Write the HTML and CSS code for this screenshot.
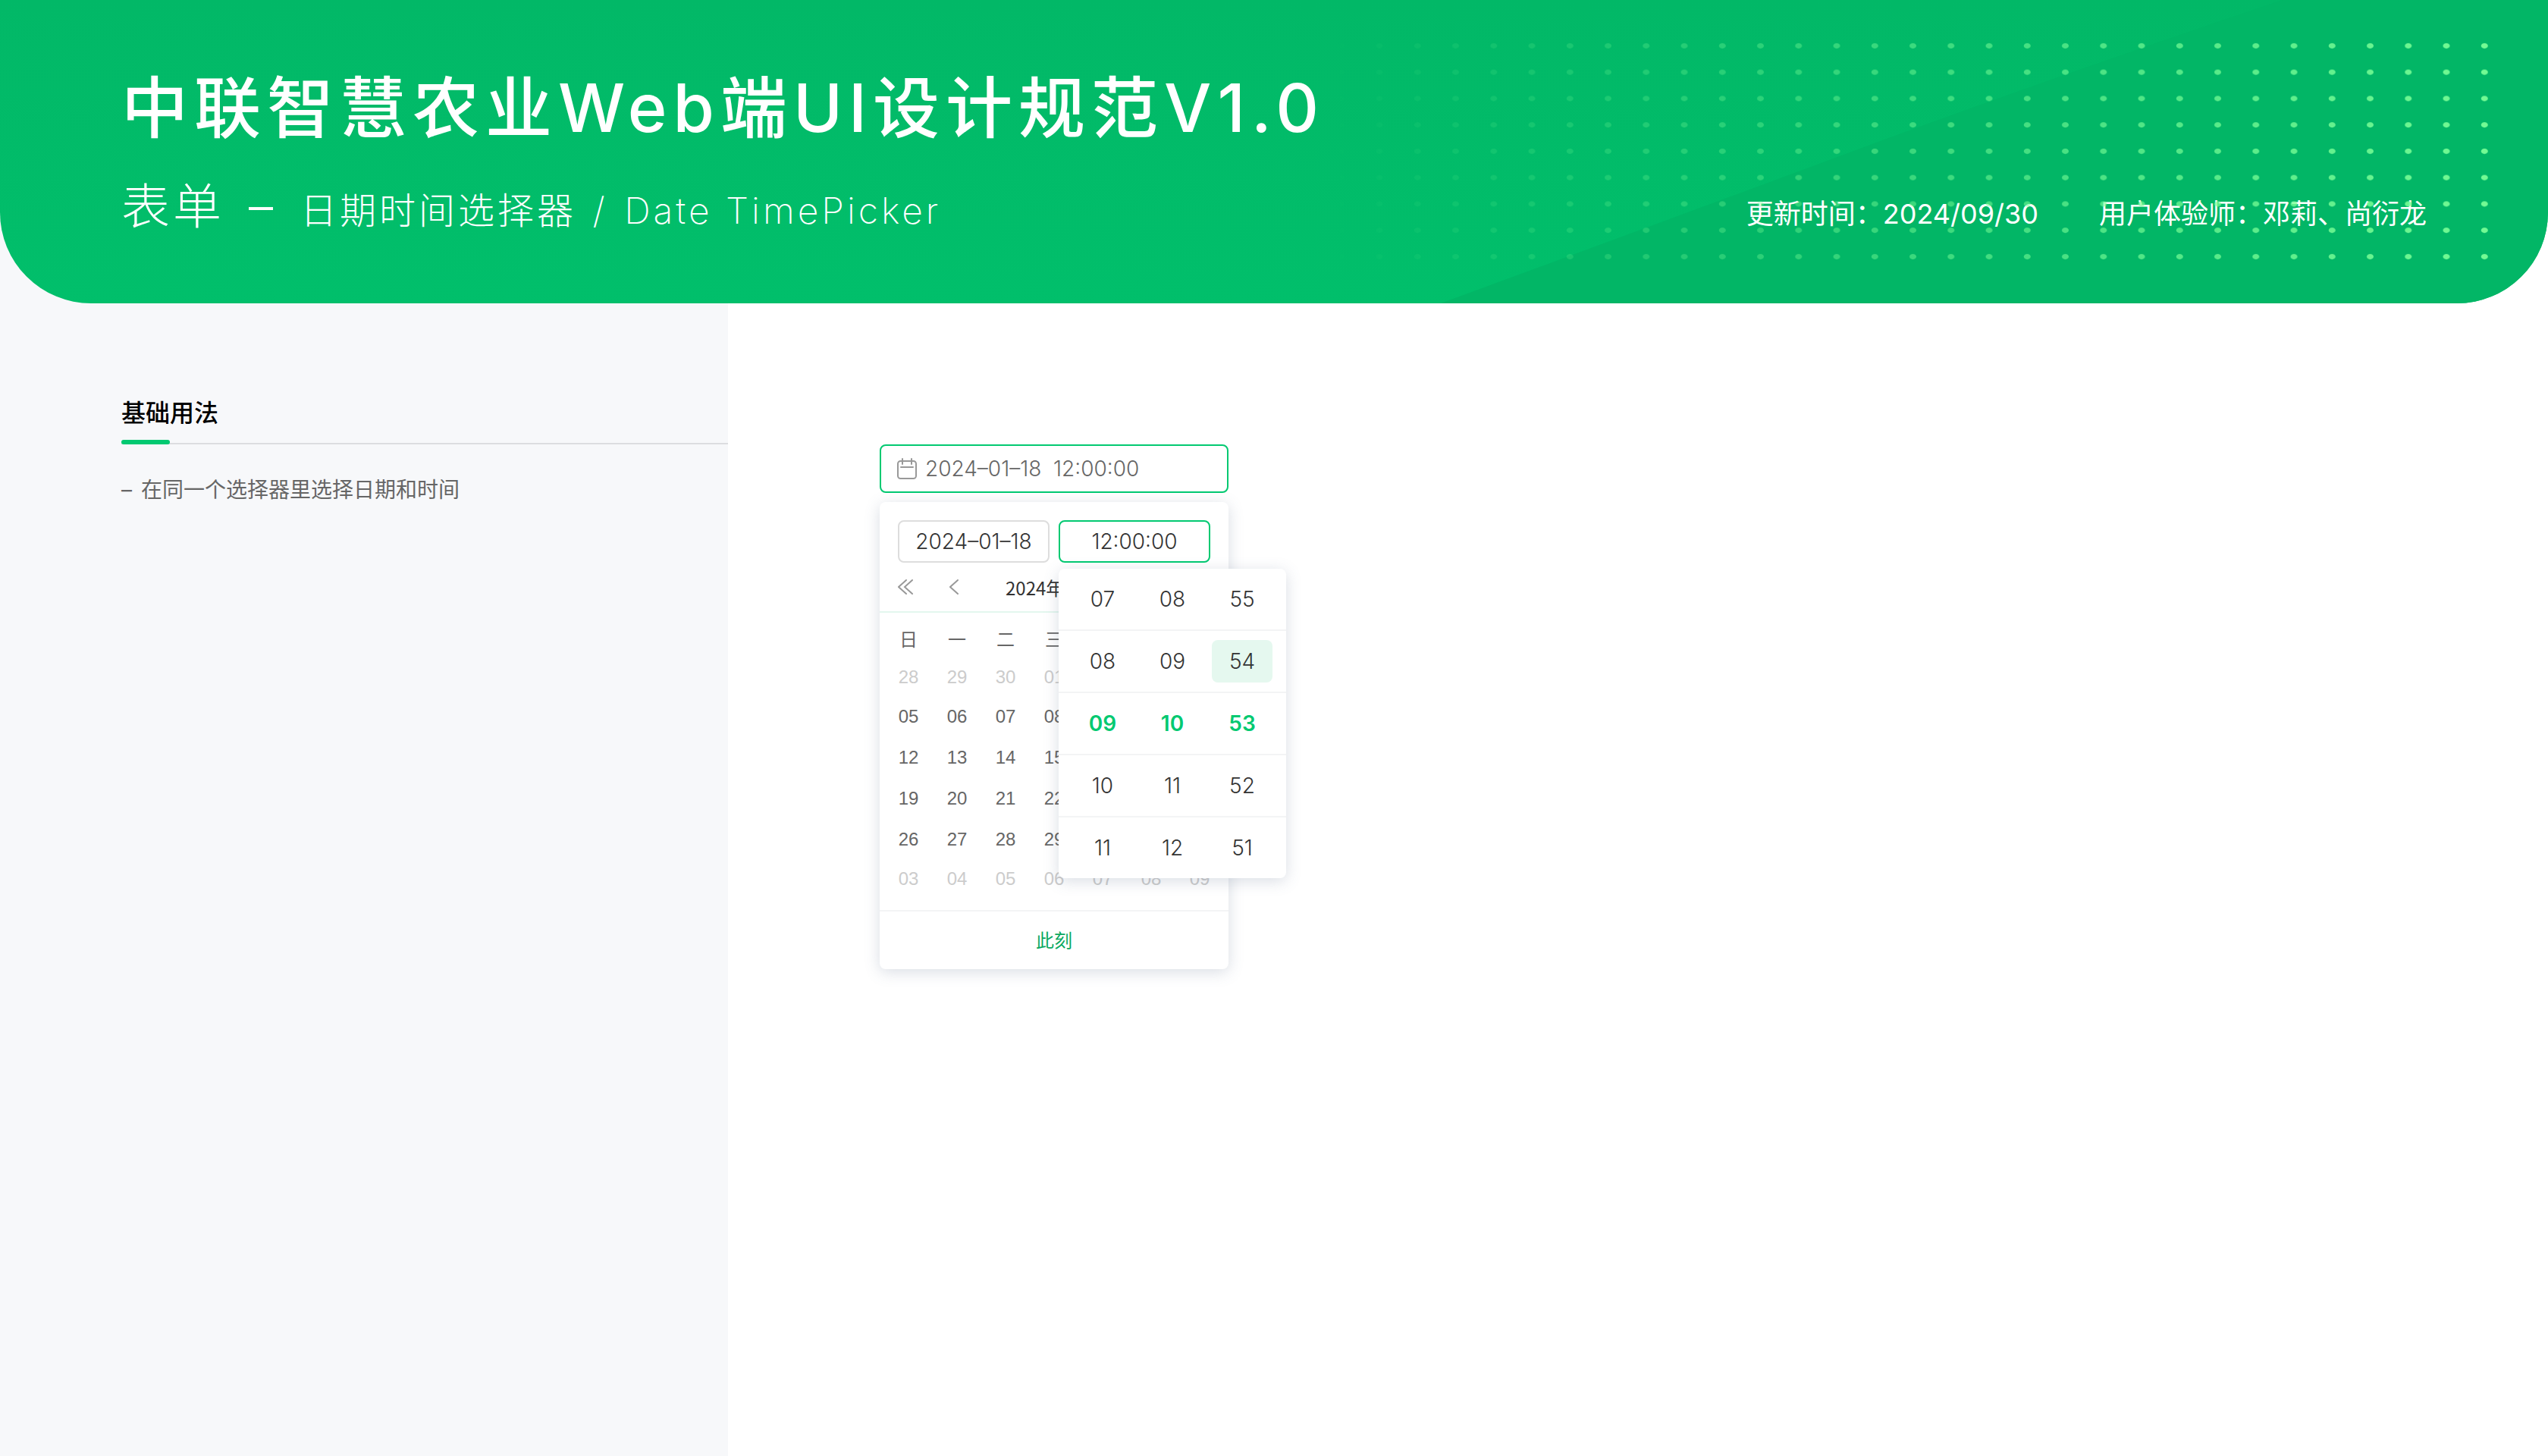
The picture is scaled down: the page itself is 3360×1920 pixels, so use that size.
FILE: index.html
```html
<!DOCTYPE html>
<html lang="zh-CN">
<head>
<meta charset="utf-8">
<title>表单 – 日期时间选择器</title>
<link rel="stylesheet" href="styles.css">
</head>
<body>
<div class="page">
  <header class="banner">
    <svg class="banner-shape" viewBox="0 0 3360 400" preserveAspectRatio="xMaxYMid slice" aria-hidden="true">
      <path d="M3010 0H3360V400H1900Q2200 290 2442 200T3010 0Z" fill="#02b666"/>
    </svg>
    <h1 class="title">中联智慧农业Web端UI设计规范V1.0</h1>
    <div class="banner-row">
      <p class="subtitle"><span class="category">表单 <span class="dash">–</span> </span>日期时间选择器 <span class="slash">/</span> Date TimePicker</p>
      <div class="meta">
        <span>更新时间：2024/09/30</span>
        <span>用户体验师：邓莉、尚衍龙</span>
      </div>
    </div>
    <svg class="banner-shape" viewBox="0 0 3360 400" preserveAspectRatio="xMaxYMid slice" aria-hidden="true">
      <defs>
        <pattern id="dots" x="1794" y="43" width="50.25" height="34.75" patternUnits="userSpaceOnUse">
          <ellipse cx="25" cy="17.4" rx="4.5" ry="3.6" fill="#7bff97"/>
        </pattern>
        <linearGradient id="fade" x1="0" x2="1" y1="0" y2="0">
          <stop offset="0" stop-color="#fff" stop-opacity="0"/>
          <stop offset="1" stop-color="#fff" stop-opacity=".95"/>
        </linearGradient>
        <mask id="fade-mask" maskUnits="userSpaceOnUse" x="1744" y="43" width="1558" height="313">
          <rect x="1744" y="43" width="1558" height="313" fill="url(#fade)"/>
        </mask>
      </defs>
      <rect x="1744" y="43" width="1558" height="312.75" fill="url(#dots)" mask="url(#fade-mask)"/>
    </svg>
  </header>

  <div class="content">
    <aside class="notes">
      <h2 class="notes-title">基础用法</h2>
      <p class="notes-text"><span>–</span><span>在同一个选择器里选择日期和时间</span></p>
    </aside>

    <main class="demo">
      <div class="picker">
        <label class="field">
          <svg class="field-icon" viewBox="0 0 26 28" fill="none" stroke="#999" stroke-width="2" stroke-linecap="round" aria-hidden="true">
            <rect x="1" y="4" width="24" height="23" rx="3.5"/>
            <path d="M7 1V8M19 1V8M5 12H21"/>
          </svg>
          <input class="field-input" type="text" aria-label="日期时间" value="2024–01–18  12:00:00">
        </label>

        <section class="panel">
          <div class="panel-inputs">
            <input class="part" type="text" aria-label="日期" value="2024–01–18">
            <div class="time">
              <input class="part part-active" type="text" aria-label="时间" value="12:00:00">
              <div class="time-menu">
                <div class="time-row"><button>07</button><button>08</button><button>55</button></div>
                <div class="time-row"><button>08</button><button>09</button><button class="hover">54</button></div>
                <div class="time-row selected"><button>09</button><button>10</button><button>53</button></div>
                <div class="time-row"><button>10</button><button>11</button><button>52</button></div>
                <div class="time-row"><button>11</button><button>12</button><button>51</button></div>
              </div>
            </div>
          </div>
          <div class="month-bar">
            <div class="month-nav">
              <button aria-label="上一年"><svg width="20" height="20" viewBox="0 0 20 20"><path d="M11 1L1 10L11 19M19 1L9 10L19 19"/></svg></button>
              <button aria-label="上一月"><svg width="12" height="20" viewBox="0 0 12 20"><path d="M11 1L1 10L11 19"/></svg></button>
            </div>
            <span class="month">2024年01月</span>
            <div class="month-nav">
              <button aria-label="下一月"><svg width="12" height="20" viewBox="0 0 12 20"><path d="M1 1L11 10L1 19"/></svg></button>
              <button aria-label="下一年"><svg width="20" height="20" viewBox="0 0 20 20"><path d="M1 1L11 10L1 19M9 1L19 10L9 19"/></svg></button>
            </div>
          </div>
          <table class="days">
            <thead>
              <tr><th>日</th><th>一</th><th>二</th><th>三</th><th>四</th><th>五</th><th>六</th></tr>
            </thead>
            <tbody>
              <tr class="outside"><td>28</td><td>29</td><td>30</td><td>01</td><td>02</td><td>03</td><td>04</td></tr>
              <tr><td>05</td><td>06</td><td>07</td><td>08</td><td>09</td><td>10</td><td>11</td></tr>
              <tr><td>12</td><td>13</td><td>14</td><td>15</td><td>16</td><td>17</td><td>18</td></tr>
              <tr><td>19</td><td>20</td><td>21</td><td>22</td><td>23</td><td>24</td><td>25</td></tr>
              <tr><td>26</td><td>27</td><td>28</td><td>29</td><td>30</td><td>01</td><td>02</td></tr>
              <tr class="outside"><td>03</td><td>04</td><td>05</td><td>06</td><td>07</td><td>08</td><td>09</td></tr>
            </tbody>
          </table>
          <button class="now">此刻</button>
        </section>
      </div>
    </main>
  </div>
</div>
</body>
</html>
```
FILE: styles.css
```css
* {
  box-sizing: border-box;
}

body {
  margin: 0;
  color: #333;
  background: linear-gradient(90deg, #f7f8fa 960px, #fff 960px);
  font-family: Inter, "Noto Sans CJK SC", sans-serif;
}

h1, h2, p {
  margin: 0;
}

button {
  padding: 0;
  border: 0;
  background: none;
  color: inherit;
  font: inherit;
  cursor: pointer;
}

input {
  min-width: 0;
  outline: none;
  font: inherit;
}

.page {
  display: flex;
  flex-direction: column;
  min-height: 100vh;
}

/* Banner */
.banner {
  position: relative;
  overflow: hidden;
  padding: 82px 160px 78px;
  border-radius: 0 0 120px 120px;
  background: linear-gradient(#02b867, #01bf6b);
  color: #fff;
}

.banner-shape {
  position: absolute;
  inset: 0;
  width: 100%;
  height: 100%;
  pointer-events: none;
}

.title {
  position: relative;
  font-size: 88px;
  font-weight: 500;
  line-height: 120px;
  letter-spacing: 8px;
}

.banner-row {
  position: relative;
  display: flex;
  align-items: baseline;
  justify-content: space-between;
  margin-top: 30px;
}

.subtitle {
  font-size: 48px;
  font-weight: 200;
  line-height: 80px;
  letter-spacing: 4px;
}

.category {
  font-size: 64px;
  font-weight: 300;
}

.dash {
  margin: 0 10px;
}

.slash {
  margin: 0 4px;
}

.meta {
  display: flex;
  gap: 80px;
  font-size: 36px;
  font-weight: 400;
  line-height: 80px;
}

/* Body columns */
.content {
  flex: 1;
  display: grid;
  grid-template-columns: 960px 1fr;
}

.notes {
  padding: 120px 0 0 160px;
}

.notes-title {
  position: relative;
  padding-bottom: 14px;
  border-bottom: 2px solid #dcdde0;
  color: #000;
  font-size: 32px;
  font-weight: 500;
  line-height: 50px;
}

.notes-title::after {
  content: "";
  position: absolute;
  left: 0;
  bottom: -2px;
  width: 64px;
  height: 6px;
  border-radius: 3px;
  background: #02c971;
}

.notes-text {
  display: flex;
  gap: 12px;
  margin-top: 40px;
  color: #666;
  font-size: 28px;
  line-height: 40px;
}

.demo {
  padding: 186px 200px 80px;
}

/* Date time picker */
.picker {
  width: 460px;
  font-size: 28px;
}

.field {
  display: flex;
  align-items: center;
  gap: 10px;
  height: 64px;
  padding: 0 20px;
  border: 2px solid #02c971;
  border-radius: 8px;
  background: #fff;
}

.field-icon {
  flex: none;
  width: 28px;
  height: 28px;
}

.field-input {
  flex: 1;
  padding: 0;
  border: 0;
  background: none;
  color: #666;
  font-weight: 300;
}

.panel {
  margin-top: 12px;
  border-radius: 8px;
  background: #fff;
  box-shadow: 0 4px 20px rgba(80, 100, 130, 0.22);
}

.panel-inputs {
  display: grid;
  grid-template-columns: 1fr 1fr;
  gap: 12px;
  padding: 24px 24px 0;
}

.part {
  width: 100%;
  height: 56px;
  padding: 0;
  border: 2px solid #ddd;
  border-radius: 8px;
  background: #fff;
  color: #333;
  font-weight: 300;
  text-align: center;
}

.part-active {
  border-color: #02c971;
}

.time {
  position: relative;
}

.time-menu {
  position: absolute;
  top: 64px;
  left: 0;
  width: 300px;
  border-radius: 8px;
  background: #fff;
  box-shadow: 0 4px 20px rgba(80, 100, 130, 0.22);
  font-weight: 300;
}

.time-row {
  display: flex;
  justify-content: space-between;
  padding: 12px 18px;
}

.time-row + .time-row {
  border-top: 2px solid #f3f4f5;
}

.time-row button {
  width: 80px;
  height: 56px;
  border-radius: 8px;
}

.time-row .hover {
  background: #e5f8ef;
}

.selected {
  color: #02c971;
  font-weight: 600;
}

.month-bar {
  display: flex;
  align-items: center;
  justify-content: space-between;
  height: 66px;
  padding: 0 24px;
  border-bottom: 2px solid #e3f7ee;
}

.month {
  font-family: "Noto Sans CJK SC", sans-serif;
  font-size: 24px;
}

.month-nav {
  display: flex;
  gap: 48px;
}

.month-nav svg {
  display: block;
  fill: none;
  stroke: #999;
  stroke-width: 2;
  stroke-linecap: round;
}

.days {
  width: 448px;
  margin: 12px 6px 0;
  border-collapse: collapse;
  table-layout: fixed;
  color: #666;
  font-family: "Liberation Sans", "Noto Sans CJK SC", sans-serif;
  font-size: 24px;
  line-height: 28px;
  text-align: center;
}

.days th {
  height: 48px;
  padding: 0;
  font-weight: 400;
}

.days td {
  height: 54px;
  padding: 0;
}

.days .outside td {
  height: 50px;
  color: #ccc;
}

.now {
  display: block;
  width: 100%;
  height: 78px;
  margin-top: 16px;
  padding-bottom: 4px;
  border-top: 2px solid #f3f4f5;
  color: #0aa860;
  font-size: 24px;
}
```
